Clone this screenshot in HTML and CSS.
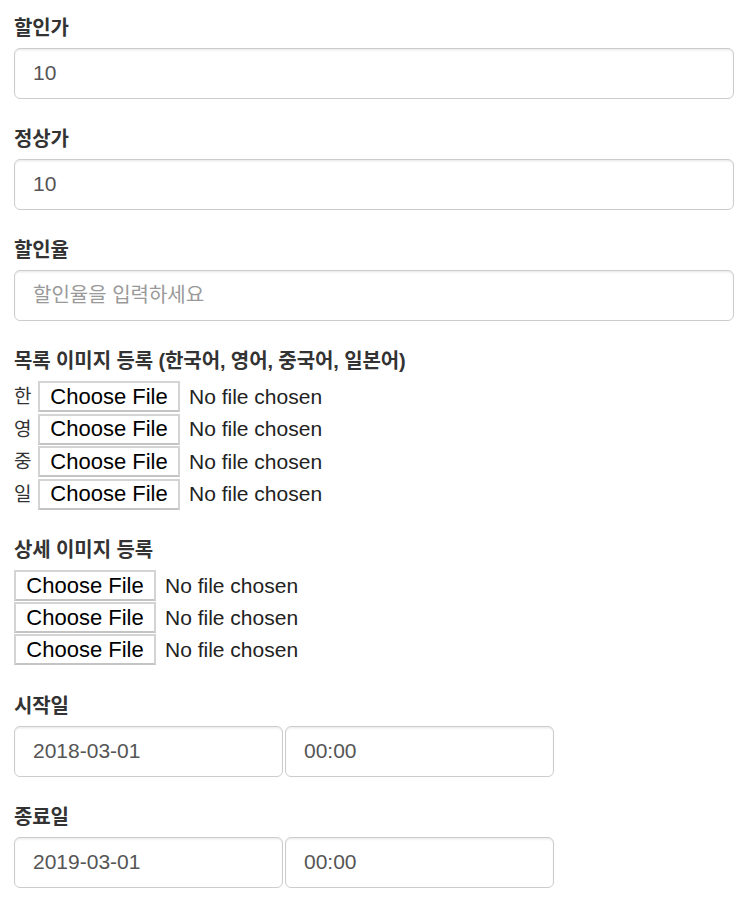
FILE: index.html
```html
<!DOCTYPE html>
<html lang="ko">
<head>
<meta charset="utf-8">
<link rel="stylesheet" href="styles.css">
</head>
<body>
<form class="form">
  <div class="form-group">
    <label class="label">할인가</label>
    <input class="control" type="text" value="10">
  </div>
  <div class="form-group">
    <label class="label">정상가</label>
    <input class="control" type="text" value="10">
  </div>
  <div class="form-group">
    <label class="label">할인율</label>
    <input class="control" type="text" placeholder="할인율을 입력하세요">
  </div>
  <div class="form-group">
    <label class="label">목록 이미지 등록 (한국어, 영어, 중국어, 일본어)</label>
    <div class="files list">
      <div class="file-row"><span class="lang">한</span><span class="file"><span class="file-btn">Choose File</span><span class="file-name">No file chosen</span></span></div>
      <div class="file-row"><span class="lang">영</span><span class="file"><span class="file-btn">Choose File</span><span class="file-name">No file chosen</span></span></div>
      <div class="file-row"><span class="lang">중</span><span class="file"><span class="file-btn">Choose File</span><span class="file-name">No file chosen</span></span></div>
      <div class="file-row"><span class="lang">일</span><span class="file"><span class="file-btn">Choose File</span><span class="file-name">No file chosen</span></span></div>
    </div>
  </div>
  <div class="form-group">
    <label class="label">상세 이미지 등록</label>
    <div class="files detail">
      <div class="file-row"><span class="file"><span class="file-btn">Choose File</span><span class="file-name">No file chosen</span></span></div>
      <div class="file-row"><span class="file"><span class="file-btn">Choose File</span><span class="file-name">No file chosen</span></span></div>
      <div class="file-row"><span class="file"><span class="file-btn">Choose File</span><span class="file-name">No file chosen</span></span></div>
    </div>
  </div>
  <div class="form-group">
    <label class="label">시작일</label>
    <div class="datetime">
      <input class="control half" type="text" value="2018-03-01">
      <input class="control half" type="text" value="00:00">
    </div>
  </div>
  <div class="form-group">
    <label class="label">종료일</label>
    <div class="datetime">
      <input class="control half" type="text" value="2019-03-01">
      <input class="control half" type="text" value="00:00">
    </div>
  </div>
</form>
</body>
</html>
```

FILE: styles.css
```css
html, body {
  margin: 0;
  padding: 0;
  background: #fff;
}
body {
  font-family: "Liberation Sans", "Noto Sans CJK KR", sans-serif;
  font-size: 21px;
  color: #333;
}
.form {
  padding: 10px 22px 0 14px;
}
.form-group {
  margin-bottom: 22.5px;
}
.label {
  display: block;
  font-weight: bold;
  font-size: 20px;
  letter-spacing: -0.1px;
  line-height: 30px;
  padding-top: 3px;
  margin-bottom: 4.5px;
  color: #333;
}
.control {
  display: block;
  box-sizing: border-box;
  width: 100%;
  height: 51px;
  padding: 9px 18px;
  font-family: "Liberation Sans", "Noto Sans CJK KR", sans-serif;
  font-size: 21px;
  color: #555;
  background: #fff;
  border: 1.5px solid #ccc;
  border-radius: 6px;
  box-shadow: inset 0 1.5px 1.5px rgba(0,0,0,.075);
  outline: none;
}
.control::placeholder {
  color: #999;
  font-size: 20px;
}
.files {
  display: flex;
  flex-direction: column;
}
.files.list {
  margin-top: 1px;
  margin-bottom: -1px;
}
.files.detail {
  margin-top: 2px;
  margin-bottom: 3px;
}
.file-row {
  display: flex;
  align-items: center;
  height: 32.5px;
}
.files.detail .file-row {
  height: 32px;
}
.lang {
  width: 24px;
  font-size: 19px;
  color: #333;
  line-height: 1;
}
.file {
  display: flex;
  align-items: center;
}
.file-btn {
  box-sizing: border-box;
  width: 142px;
  height: 31px;
  display: flex;
  align-items: center;
  justify-content: center;
  border: 2px solid #d4d4d4;
  border-bottom-color: #c4c4c4;
  background: #fff;
  color: #000;
  font-size: 22px;
}
.file-name {
  margin-left: 9px;
  font-size: 21px;
  color: #222;
}
.datetime {
  display: flex;
  gap: 2px;
}
.control.half {
  width: 269px;
}
```
